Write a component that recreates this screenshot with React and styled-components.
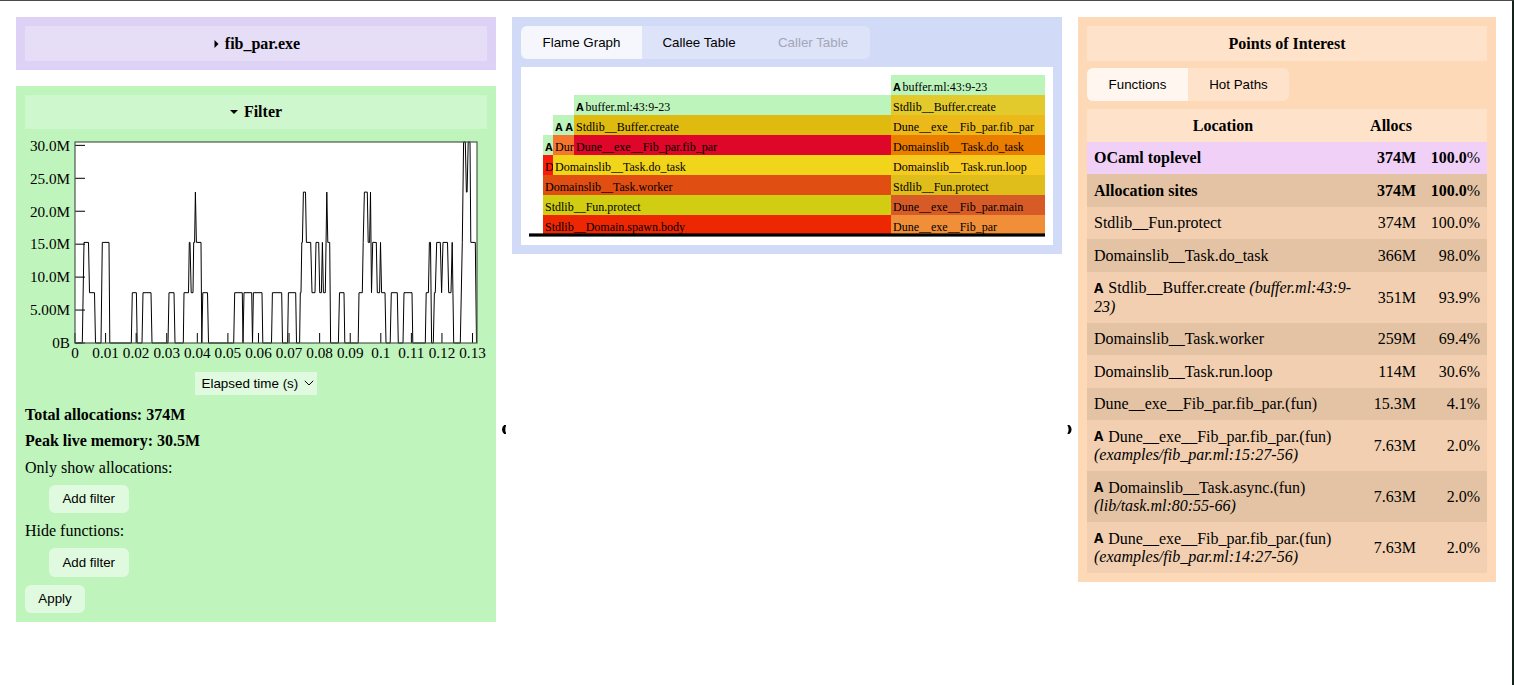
import React from 'react';
import styled, { createGlobalStyle } from 'styled-components';

const serif = '"Liberation Serif", "Times New Roman", serif';
const sans = '"Liberation Sans", Arial, sans-serif';

const GlobalStyle = createGlobalStyle`
  * { box-sizing: border-box; }
  body { margin: 0; background: #fff; color: #000; font: 16px/18.5px ${serif}; overflow: hidden; }
`;

const Page = styled.div`
  display: flex;
  align-items: flex-start;
  height: 685px;
  width: 1514px;
  padding: 16px 16px 0;
  border-top: 1px solid #4b4650;
  border-right: 2px solid #14221c;
`;

const Column = styled.div`
  flex: none;
  display: flex;
  flex-direction: column;
  gap: 16px;
  width: ${(p) => p.$width}px;
`;

const Panel = styled.section`
  background: ${(p) => p.$color};
  padding: 9px;
`;

const PanelTitle = styled.h2`
  display: flex;
  align-items: center;
  justify-content: center;
  gap: ${(p) => p.$gap || 6}px;
  height: 34.5px;
  margin: 0 0 ${(p) => p.$below || 0}px;
  padding: 1px 0 0 ${(p) => p.$shift || 0}px;
  font-size: 16px;
  font-weight: bold;
  background: rgba(255, 255, 255, 0.26);
`;

const Splitter = styled.div`
  flex: none;
  display: flex;
  justify-content: ${(p) => p.$align};
  width: 16px;
  padding: 407px 5px 0;
`;

const ChartSvg = styled.svg`
  display: block;
  width: 480px;
  height: 242.5px;
  margin: 0 -9px 0;
  font: 15.2px ${serif};
`;

const SelectRow = styled.div`
  display: flex;
  justify-content: center;
  margin-right: 1px;
`;

const Select = styled.div`
  display: flex;
  align-items: center;
  justify-content: space-between;
  width: 122px;
  height: 23px;
  padding: 0 3px 0 7px;
  font: 13.4px ${sans};
  background: rgba(255, 255, 255, 0.5);
  white-space: nowrap;
`;

const FilterLine = styled.p`
  height: 18.5px;
  margin: ${(p) => p.$top || 8}px 0 0;
  padding-top: 0.5px;
  font-weight: ${(p) => (p.$strong ? 'bold' : 'normal')};
`;

const Button = styled.button`
  display: block;
  height: 28.8px;
  width: ${(p) => p.$width}px;
  margin: 8px 0 0 ${(p) => p.$indent || 0}px;
  padding: 0;
  border: 0;
  border-radius: 6px;
  color: #000;
  font: 13.33px ${sans};
  background: rgba(255, 255, 255, 0.5);
`;

const Tabs = styled.div`
  display: flex;
  width: max-content;
  height: 33px;
  margin-bottom: 8px;
  border-radius: 6px;
  overflow: hidden;
  background: rgba(255, 255, 255, 0.26);
`;

const Tab = styled.button`
  width: ${(p) => p.$width}px;
  padding: 0 0 1px;
  border: 0;
  font: 13.33px ${sans};
  color: ${(p) => (p.$disabled ? '#a3a7b7' : '#000')};
  background: ${(p) => (p.$active ? 'rgba(255,255,255,0.7)' : 'transparent')};
`;

const FlameBox = styled.div`
  height: 178px;
  padding: 8px;
  background: #fff;
`;

const FlameSvg = styled.svg`
  display: block;
  font: 12px ${serif};
`;

const Table = styled.table`
  width: 400px;
  table-layout: fixed;
  border-collapse: collapse;
`;

const Th = styled.th`
  width: ${(p) => p.$width}px;
  height: 32.5px;
  padding: 1px 7px 0;
  background: rgba(255, 255, 255, 0.26);
`;

const Row = styled.tr`
  height: ${(p) => (p.$tall ? 51 : 32.5)}px;
  background: ${(p) => p.$color};
  font-weight: ${(p) => (p.$strong ? 'bold' : 'normal')};
`;

const Cell = styled.td`
  padding: 1px 7px 0;
  text-align: ${(p) => (p.$number ? 'right' : 'left')};
  white-space: ${(p) => (p.$number ? 'nowrap' : 'normal')};
`;

const PercentSign = styled.span`
  font-weight: normal;
`;

const AllocMark = styled.span`
  display: inline-block;
  width: 14.3px;
  font: bold 13.5px/12px "Noto Sans", sans-serif;
  vertical-align: 0.5px;
`;

const B = 343;
const L1 = 292.7;
const L2 = 242.4;
const L3 = 192.1;
const L4 = 142;
const memory = [
  [75, B], [82.3, B], [84, L2], [88.5, L2], [89.5, L1], [94.5, L1], [95.5, B],
  [101, B], [102.3, L2], [109, L2], [109.8, B],
  [131.3, B], [132.3, L1], [136.4, L1], [137.2, B], [142, B], [143, L1], [151, L1], [152, B],
  [168, B], [169, L1], [174, L1], [175, B],
  [183.3, B], [184, L1], [188.5, L1], [189.3, L2], [190, L2], [191.2, L1], [193, L1], [193.7, L2], [194.6, L2], [195.4, L3], [196.4, L2], [201, L2], [201.8, B], [202.8, L1], [207.5, L1], [208.5, B],
  [233.7, B], [234.7, L1], [242.3, L1], [243, B], [244, L1], [251.7, L1], [252.5, B], [253.4, L1], [262, L1], [262.8, B],
  [271.5, B], [272.4, L1], [281.7, L1], [282.5, B], [287.6, B], [288.4, L1], [295.7, L1], [296.5, B],
  [299.6, B], [300.3, L1], [301, L1], [301.8, L2], [302.4, L2], [303.4, L3], [305.5, L3], [306.4, L2], [310.7, L2], [312, L1], [315, L1], [316, L2], [318.7, L2], [319.7, L1], [321.4, L1], [322.4, L2], [323.4, L1], [325.3, L1], [326.8, L3], [327.8, L2], [329.7, L2], [330.6, B],
  [338.4, B], [339.5, L1], [344, L1], [344.8, B],
  [358.2, B], [359, L1], [362.3, L1], [363.2, L2], [364.4, L3], [367.3, L3], [368.2, L2], [369.6, L2], [370.5, L3], [371.5, L1], [372.7, L2], [376.3, L2], [377.3, L1], [379.6, L1], [380.5, L2], [381.6, L1], [385, L1], [386, B],
  [390.2, B], [391.3, L1], [397.3, L1], [398.3, B], [403, B], [404, L1], [412, L1], [412.8, B],
  [425.3, B], [426.2, L1], [428.4, L1], [429.4, L2], [430.5, L2], [431.6, B], [433.3, B], [434.4, L1], [435.3, L1], [436.7, L2], [440.3, L2], [441.6, L1], [443, L2], [447.5, L2], [448.7, L1], [451, L1], [452.2, L2], [453.7, B],
  [460.3, B], [462.3, L2], [463.6, L4], [465.3, L4], [466.4, L3], [467.1, L3], [468.2, L4], [470, L4], [470.8, L2], [475.3, L2], [476.5, B],
];

const yTicks = ['0B', '5.00M', '10.0M', '15.0M', '20.0M', '25.0M', '30.0M'];
const xTicks = ['0', '0.01', '0.02', '0.03', '0.04', '0.05', '0.06', '0.07', '0.08', '0.09', '0.1', '0.11', '0.12', '0.13'];

function MemoryChart() {
  return (
    <ChartSvg viewBox="16 129 480 242.5">
      <rect x="75" y="142" width="402" height="201" fill="#fff" />
      <polyline points={memory.map((p) => p.join(',')).join(' ')} fill="none" stroke="#000" strokeWidth="1" />
      {yTicks.map((t, i) => {
        const y = B - i * 32.94;
        return (
          <g key={t}>
            <path d={`M75 ${y}h10`} stroke="#000" />
            <text x="70" y={y + 5.3} textAnchor="end">{t}</text>
          </g>
        );
      })}
      {xTicks.map((t, i) => {
        const x = 75 + i * 30.58;
        return (
          <g key={t}>
            <path d={`M${x} ${B}v-10`} stroke="#000" />
            <text x={x} y="358.3" textAnchor="middle">{t}</text>
          </g>
        );
      })}
      <rect x="75" y="142" width="402" height="201" fill="none" stroke="#4b5a4c" strokeWidth="1.2" />
    </ChartSvg>
  );
}

// Each frame: x, width, level from the bottom, colour, label, allocation marks.
const frames = [
  [543, 348, 0, '#ee2703', 'Stdlib__Domain.spawn.body'],
  [543, 348, 1, '#d1cd12', 'Stdlib__Fun.protect'],
  [543, 348, 2, '#e04e12', 'Domainslib__Task.worker'],
  [543, 10, 3, '#fb1b0a', 'D'],
  [543, 10, 4, '#bdf4bc', '', ['A']],
  [553, 338, 3, '#f0d51a', 'Domainslib__Task.do_task'],
  [553, 21, 4, '#f5772d', 'Dur'],
  [553, 21, 5, '#bdf4bc', '', ['A', 'A']],
  [574, 317, 4, '#de0629', 'Dune__exe__Fib_par.fib_par'],
  [574, 317, 5, '#dfba0f', 'Stdlib__Buffer.create'],
  [574, 317, 6, '#bdf4bc', 'buffer.ml:43:9-23', ['A']],
  [891, 154, 0, '#f18e38', 'Dune__exe__Fib_par'],
  [891, 154, 1, '#d65b27', 'Dune__exe__Fib_par.main'],
  [891, 154, 2, '#dfbd1b', 'Stdlib__Fun.protect'],
  [891, 154, 3, '#f5ca21', 'Domainslib__Task.run.loop'],
  [891, 154, 4, '#ea7c00', 'Domainslib__Task.do_task'],
  [891, 154, 5, '#ecb91b', 'Dune__exe__Fib_par.fib_par'],
  [891, 154, 6, '#e2ca2c', 'Stdlib__Buffer.create'],
  [891, 154, 7, '#bdf4bc', 'buffer.ml:43:9-23', ['A']],
];

function FlameGraph() {
  return (
    <FlameSvg width="516" height="162" viewBox="529 75 516 162">
      {frames.map(([x, w, level, color, label, marks = []]) => {
        const y = 215 - level * 20;
        return (
          <g key={`${x}-${level}`}>
            <rect x={x} y={y} width={w} height="20" fill={color} />
            {marks.map((m, i) => (
              <text key={i} x={x + 2.2 + i * 10.2} y={y + 16} fontFamily="Noto Sans" fontWeight="bold" fontSize="10.6">{m}</text>
            ))}
            <text x={x + 2 + marks.length * 9.4} y={y + 16}>{label}</text>
          </g>
        );
      })}
      <rect x="529" y="233.4" width="516" height="3.2" fill="#000" />
    </FlameSvg>
  );
}

const dark = '#e4c3a4';
const light = '#f1cfb0';
const rows = [
  { name: 'OCaml toplevel', size: '374M', pct: '100.0', strong: true, color: '#f1d0f8' },
  { name: 'Allocation sites', size: '374M', pct: '100.0', strong: true, color: dark },
  { name: 'Stdlib__Fun.protect', size: '374M', pct: '100.0', color: light },
  { name: 'Domainslib__Task.do_task', size: '366M', pct: '98.0', color: dark },
  { name: 'Stdlib__Buffer.create', loc: <>(buffer.ml:43:9-<wbr />23)</>, size: '351M', pct: '93.9', color: light },
  { name: 'Domainslib__Task.worker', size: '259M', pct: '69.4', color: dark },
  { name: 'Domainslib__Task.run.loop', size: '114M', pct: '30.6', color: light },
  { name: 'Dune__exe__Fib_par.fib_par.(fun)', size: '15.3M', pct: '4.1', color: dark },
  { name: 'Dune__exe__Fib_par.fib_par.(fun)', loc: '(examples/fib_par.ml:15:27-56)', size: '7.63M', pct: '2.0', color: light },
  { name: 'Domainslib__Task.async.(fun)', loc: '(lib/task.ml:80:55-66)', size: '7.63M', pct: '2.0', color: dark },
  { name: 'Dune__exe__Fib_par.fib_par.(fun)', loc: '(examples/fib_par.ml:14:27-56)', size: '7.63M', pct: '2.0', color: light },
];

function PointsTable() {
  return (
    <Table>
      <thead>
        <tr>
          <Th $width={272}>Location</Th>
          <Th $width={64}>Allocs</Th>
          <Th $width={64} />
        </tr>
      </thead>
      <tbody>
        {rows.map((r, i) => (
          <Row key={i} $tall={!!r.loc} $color={r.color} $strong={r.strong}>
            <Cell>
              {r.loc && <AllocMark>A</AllocMark>}
              {r.name}
              {r.loc && <> <em>{r.loc}</em></>}
            </Cell>
            <Cell $number>{r.size}</Cell>
            <Cell $number>{r.pct}<PercentSign>%</PercentSign></Cell>
          </Row>
        ))}
      </tbody>
    </Table>
  );
}

export default function App() {
  return (
    <Page>
      <GlobalStyle />
      <Column $width={480}>
        <Panel $color="#ddd2f5">
          <PanelTitle $shift={2}>
            <svg width="5" height="8" viewBox="0 0 5 8"><path d="M0.5 0L4.5 4L0.5 8z" /></svg>
            fib_par.exe
          </PanelTitle>
        </Panel>
        <Panel $color="#bff4bc">
          <PanelTitle>
            <svg width="8" height="4" viewBox="0 0 8 4"><path d="M0 0H8L4 4z" /></svg>
            Filter
          </PanelTitle>
          <MemoryChart />
          <SelectRow>
            <Select>
              Elapsed time (s)
              <svg width="10" height="6" viewBox="0 0 10 6" fill="none" stroke="#000"><path d="M0.8 0.8L5 5L9.2 0.8" /></svg>
            </Select>
          </SelectRow>
          <FilterLine $strong $top={10.5}>Total allocations: 374M</FilterLine>
          <FilterLine $strong>Peak live memory: 30.5M</FilterLine>
          <FilterLine>Only show allocations:</FilterLine>
          <Button $width={79.5} $indent={24}>Add filter</Button>
          <FilterLine>Hide functions:</FilterLine>
          <Button $width={79.5} $indent={24}>Add filter</Button>
          <Button $width={60}>Apply</Button>
        </Panel>
      </Column>
      <Splitter $align="flex-start">
        <svg width="6" height="11" viewBox="0 0 6 11"><path d="M5 1H3.2Q1 2.6 1 5.4T3.2 9.9H5V9Q4.3 7.5 4.3 5.4T5 1.8z" /></svg>
      </Splitter>
      <Column $width={550}>
        <Panel $color="#d1daf7">
          <Tabs>
            <Tab $width={121} $active>Flame Graph</Tab>
            <Tab $width={114}>Callee Table</Tab>
            <Tab $width={114} $disabled>Caller Table</Tab>
          </Tabs>
          <FlameBox><FlameGraph /></FlameBox>
        </Panel>
      </Column>
      <Splitter $align="flex-end">
        <svg width="6" height="11" viewBox="0 0 6 11"><path d="M.6 1H2.4Q4.6 2.6 4.6 5.4T2.4 9.9H.6V9Q1.6 7.5 1.6 5.4T.6 1.8z" /></svg>
      </Splitter>
      <Column $width={418}>
        <Panel $color="#fed9b8">
          <PanelTitle $below={7.8}>Points of Interest</PanelTitle>
          <Tabs>
            <Tab $width={101} $active>Functions</Tab>
            <Tab $width={101}>Hot Paths</Tab>
          </Tabs>
          <PointsTable />
        </Panel>
      </Column>
    </Page>
  );
}
